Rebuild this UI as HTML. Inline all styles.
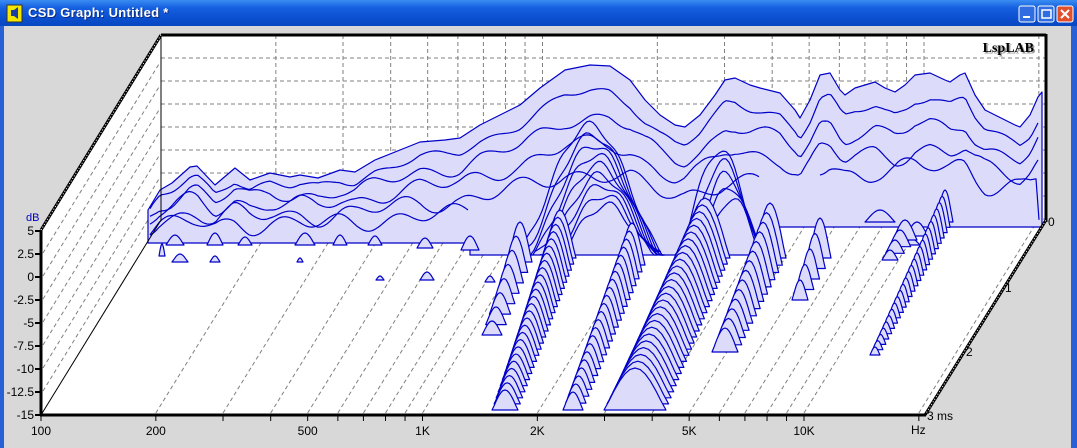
<!DOCTYPE html>
<html><head><meta charset="utf-8"><style>
html,body{margin:0;padding:0;width:1077px;height:448px;overflow:hidden;background:#d8d8d8;font-family:"Liberation Sans",sans-serif}
#tb{position:absolute;left:0;top:0;width:1077px;height:26px;background:linear-gradient(#3a8cf2,#1560e0 30%,#0a4fd0 70%,#0848c0);}
#tt{position:absolute;left:28px;top:5px;color:#fff;font-weight:bold;font-size:13px;text-shadow:1px 1px 0 #0a2a80;letter-spacing:0.3px}
svg{position:absolute;left:0;top:0}
</style></head><body>
<div id="tb"><div id="tt">CSD Graph: Untitled *</div></div>
<svg id="s" width="1077" height="448" viewBox="0 0 1077 448" font-family="Liberation Sans, sans-serif">
<rect x="7" y="5" width="15" height="17" fill="#f5e600" stroke="#333" stroke-width="1"/>
<path d="M11 10h3l4-3v12l-4-3h-3z" fill="#1a3fa0"/>
<rect x="1019" y="6" width="16" height="16" rx="2" fill="#2f6de0" stroke="#fff"/>
<rect x="1023" y="16" width="7" height="2" fill="#fff"/>
<rect x="1038" y="6" width="16" height="16" rx="2" fill="#2f6de0" stroke="#fff"/>
<rect x="1042" y="10" width="9" height="8" fill="none" stroke="#fff" stroke-width="1.5"/>
<rect x="1057" y="6" width="16" height="16" rx="2" fill="#e0502a" stroke="#fff"/>
<path d="M1061 10l8 8M1069 10l-8 8" stroke="#fff" stroke-width="2"/>
<rect x="0" y="26" width="4" height="422" fill="#2860d8"/>
<rect x="1071" y="26" width="6" height="422" fill="#2860d8"/>
<rect x="4" y="26" width="1067" height="422" fill="#d8d8d8"/>
<polygon points="41,230 161,35 1046,35 1046,220 925,415 41,415" fill="#fff"/>
<g id="grid" stroke="#808080" stroke-width="1" stroke-dasharray="4,3" fill="none"></g>
<g id="wf" stroke="#0000c8" stroke-width="1.2" fill="#dcdcfa" stroke-linejoin="round"></g>
<line x1="161" y1="35" x2="1046" y2="35" stroke="#000" stroke-width="3"/>
<line x1="1046" y1="34" x2="1046" y2="222" stroke="#000" stroke-width="3"/>
<line x1="161" y1="35" x2="161" y2="220" stroke="#000" stroke-width="1"/>
<line x1="41" y1="415" x2="161" y2="220" stroke="#000" stroke-width="1"/>
<line x1="41" y1="230" x2="161" y2="35" stroke="#000" stroke-width="3"/>
<line x1="41" y1="230" x2="161" y2="35" stroke="#fff" stroke-width="1" stroke-dasharray="1,2"/>
<line x1="925" y1="415" x2="1046" y2="220" stroke="#000" stroke-width="3"/>
<line x1="925" y1="415" x2="1046" y2="220" stroke="#fff" stroke-width="1" stroke-dasharray="1,2"/>
<line x1="41" y1="230" x2="41" y2="416" stroke="#000" stroke-width="3"/>
<line x1="40" y1="415" x2="926" y2="415" stroke="#000" stroke-width="3"/>
<g id="ax" font-size="12" fill="#000"></g>
<text x="26" y="221" font-size="11" fill="#0000c0">dB</text>
<text x="1034" y="52" font-family="Liberation Serif,serif" font-weight="bold" font-size="14" fill="#999" transform="translate(1.5,1.5)" text-anchor="end">LspLAB</text>
<text x="1034" y="52" font-family="Liberation Serif,serif" font-weight="bold" font-size="14" fill="#000" text-anchor="end">LspLAB</text>
<text x="1048" y="226" font-size="12">0</text>
<text x="1005" y="292" font-size="12">1</text>
<text x="966" y="356" font-size="12">2</text>
<text x="927" y="420" font-size="12">3 ms</text>
<text x="911" y="434" font-size="12">Hz</text>
</svg>
<script>
var NS="http://www.w3.org/2000/svg";
function el(p,t,a){var e=document.createElementNS(NS,t);for(var k in a)e.setAttribute(k,a[k]);document.getElementById(p).appendChild(e);return e;}
function X(f){return 41+381.5*Math.log10(f/100);}
for(var y=58;y<220;y+=23) el("grid","line",{x1:161,y1:y,x2:1046,y2:y});
var fr=[200,300,400,500,600,700,800,900,1000,2000,3000,4000,5000,6000,7000,8000,9000,10000,20000];
fr.forEach(function(f){var x=X(f)+120;if(x<1046)el("grid","line",{x1:x,y1:35,x2:x,y2:220});});
fr.forEach(function(f){var x=X(f);if(x<925)el("grid","line",{x1:x,y1:413,x2:x+118,y2:222});});
for(var k=1;k<=7;k++){var y0=230+23*k;el("grid","line",{x1:43,y1:y0,x2:159,y2:y0-189});}
var dbs=["5","2.5","0","-2.5","-5","-7.5","-10","-12.5","-15"];
dbs.forEach(function(d,i){var y=231+23*i;el("ax","line",{x1:35,y1:y,x2:41,y2:y,stroke:"#000","stroke-width":2});var t=el("ax","text",{x:34,y:y+4,"text-anchor":"end"});t.textContent=d;});
fr.concat([100]).forEach(function(f){var x=X(f);if(x<925)el("ax","line",{x1:x,y1:415,x2:x,y2:421,stroke:"#000","stroke-width":1});});
[["100",100],["200",200],["500",500],["1K",1000],["2K",2000],["5K",5000],["10K",10000]].forEach(function(a){var t=el("ax","text",{x:X(a[1]),y:435,"text-anchor":"middle"});t.textContent=a[0];});
function poly(pts){return el("wf","polygon",{points:pts.map(function(p){return p.map(function(v){return v.toFixed(1)}).join(",")}).join(" ")});}
function pline(pts){return el("wf","polyline",{points:pts.map(function(p){return p.map(function(v){return v.toFixed(1)}).join(",")}).join(" "),fill:"none"});}
var env=[[148,243],[148,210],[160,190],[172,183],[190,167],[197,166],[215,185],[235,168],[250,180],[270,173],[290,177],[300,175],[318,178],[340,170],[355,172],[375,160],[405,148],[420,142],[445,140],[460,138],[480,125],[520,105],[540,88],[565,70],[590,65],[610,66],[630,80],[645,100],[660,115],[675,125],[685,127],[700,115],[715,95],[725,80],[735,78],[750,85],[760,88],[780,93],[795,110],[800,118],[810,100],[820,75],[830,73],[840,90],[845,95],[855,88],[875,82],[885,88],[895,92],[905,85],[915,75],[930,73],[945,80],[950,82],[960,75],[965,73],[975,95],[985,110],[995,115],[1005,120],[1015,125],[1020,127],[1030,115],[1038,97],[1042,92],[1042,227],[760,227],[760,255],[470,255],[470,243]];
poly(env);
var E=env.slice(1,env.length-6);
function ey(x){for(var i=0;i<E.length-1;i++){if(x>=E[i][0]&&x<=E[i+1][0]){var t=(x-E[i][0])/(E[i+1][0]-E[i][0]);return E[i][1]+(E[i+1][1]-E[i][1])*t;}}return 200;}
function curve(s,amp,seed,x0,x1,base){base=base||240;var pts=[];for(var x=x0;x<=x1;x+=3){var y=base-(base-ey(x))*s+Math.sin(x*0.11+seed)*amp+Math.sin(x*0.047+seed*3)*amp*0.6;y=Math.max(y,ey(x)+2);pts.push([x,Math.min(y,base)]);}pline(pts);}
curve(0.85,3,1,150,1040);curve(0.7,5,2,150,1040);curve(0.55,6,3,150,1040);curve(0.38,7,4,150,760);curve(0.25,7,5,150,470);curve(0.4,9,6,820,1040,228);
// central hump contours
function hump(cx,w,pk,base,seed){var pts=[];for(var x=cx-w/2;x<=cx+w/2;x+=3){var t=(x-(cx-w/2))/w;var y=base-(base-pk)*Math.pow(Math.sin(Math.PI*t),1.6)+Math.sin(x*0.2+seed)*4;pts.push([x,Math.min(y,base)]);}pline(pts);}
for(var i=0;i<9;i++){hump(590+i*2,150-i*6,125+i*10,255,i);}
for(var i=0;i<5;i++){hump(720+i*3,90-i*6,150+i*12,255,i+3);}
function bump(cx,by,w,h){var pts=[];for(var i=0;i<=12;i++){var t=i/12;pts.push([cx-w/2+w*t,by-h*Math.pow(Math.sin(Math.PI*t),1.1)]);}poly(pts);}
[[175,245,18,10],[215,245,16,12],[245,245,14,8],[305,245,20,12],[340,245,14,10],[375,245,14,9],[425,248,16,10],[470,250,18,14],[563,252,22,15],[180,262,16,8],[215,262,10,6],[300,262,6,4],[380,280,8,4],[427,280,14,8],[490,282,10,6],[810,272,16,8],[880,222,30,12],[917,236,22,14],[912,245,16,6],[162,256,6,12]].forEach(function(b){bump(b[0],b[1],b[2],b[3]);});
function ridge(sx,sy,ex,ey2,n,w0,w1,h0,h1){for(var i=0;i<n;i++){var t=i/(n-1);bump(sx+(ex-sx)*t,sy+(ey2-sy)*t,w0+(w1-w0)*t,h0+(h1-h0)*t);}}
ridge(520,262,492,335,8,24,20,40,14);
ridge(560,258,505,410,26,32,26,48,20);
ridge(632,265,573,410,22,26,20,42,18);
ridge(705,258,635,410,26,50,62,60,42);
ridge(770,258,725,352,14,32,26,55,24);
ridge(820,258,800,300,5,22,16,40,20);
ridge(945,222,875,355,26,16,10,32,8);
ridge(905,240,890,260,4,24,16,20,10);
</script>
</body></html>
